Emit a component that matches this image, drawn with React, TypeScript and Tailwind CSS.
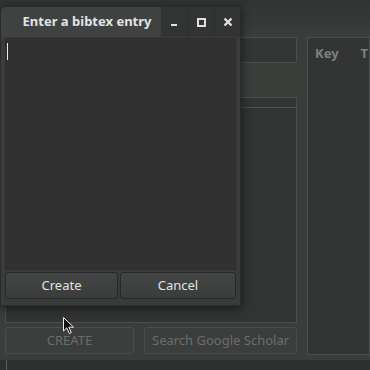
import React from "react";

export default function App() {
  return (
    <div
      className="relative w-[370px] h-[370px] overflow-hidden bg-[#3a3e3b] text-[#e2e2e2]"
      style={{ fontFamily: '"Noto Sans", "Open Sans", sans-serif' }}
    >
      {/* background window */}
      <div className="flex flex-col h-full">
        <div className="h-[33px] bg-gradient-to-b from-[#313332] to-[#393c3a]" />
        <div className="flex flex-1 pl-[5px] gap-[10px]">
          <div className="flex flex-col w-[292px] pt-[4px]">
            <div className="h-[26px] ml-[230px] rounded-[2px] border border-[#4b4e4c] bg-[#343635]" />
            <div className="h-[34px]" />
            <div className="flex-1 flex flex-col border border-[#4b4e4c] bg-[#363937]">
              <div className="h-[10px] bg-[#333534] border-b border-[#4b4e4c]" />
              <div className="flex-1 bg-[#323433]" />
            </div>
            <div className="flex gap-[10px] mt-[4px] h-[27px]">
              <div className="w-[129px] rounded-[3px] border border-[#4a4d4b] bg-[#3b3e3c] flex items-center justify-center text-[13px] text-[#6a6d6b]">
                CREATE
              </div>
              <div className="flex-1 rounded-[3px] border border-[#4a4d4b] bg-[#3b3e3c] flex items-center px-[7px] text-[13px] text-[#6a6d6b] whitespace-nowrap overflow-hidden">
                Search Google Scholar
              </div>
            </div>
            <div className="h-[6px]" />
          </div>
          <div className="flex-1 mt-[4px] mb-[5px] border border-[#4b4e4c] bg-[#333534] pl-[7px] pt-[6px] flex justify-between">
            <span className="text-[13px] font-bold text-[#7e817f]">Key</span>
            <span className="text-[13px] font-bold text-[#7e817f] mr-[1px]">T</span>
          </div>
        </div>
        <div className="h-[10px] bg-[#2e302f] flex">
          <div className="ml-[6px] w-px bg-[#5a5d5b]" />
        </div>
      </div>

      {/* dialog */}
      <div className="absolute left-0 top-[6px] w-[241px] h-[300px] bg-[#393c3a] border border-[#2a2c2b] rounded-t-[5px] shadow-[0_2px_10px_rgba(0,0,0,0.6)] flex flex-col">
        <div className="h-[30px] flex bg-[#323433] rounded-t-[5px]">
          <div className="w-[160px] bg-[#3f4240] rounded-tl-[5px] rounded-br-[4px] flex items-center justify-center pl-[12px] text-[13px] font-bold text-[#e4e4e4] whitespace-nowrap">
            Enter a bibtex entry
          </div>
          <div className="w-[27px] flex items-center justify-center border-r border-[#2c2e2d]">
            <div className="w-[6px] h-[2px] bg-[#e0e0e0] mt-[5px]" />
          </div>
          <div className="w-[27px] flex items-center justify-center border-r border-[#2c2e2d]">
            <div className="w-[9px] h-[9px] border-2 border-[#e0e0e0]" />
          </div>
          <div className="flex-1 flex items-center justify-center">
            <svg width="10" height="10" viewBox="0 0 10 10">
              <path d="M1.5 1.5 L8.5 8.5 M8.5 1.5 L1.5 8.5" stroke="#e0e0e0" strokeWidth="2.4" />
            </svg>
          </div>
        </div>
        <div className="flex-1 flex flex-col px-[4px] pb-[6px] pt-[1px] gap-[2px]">
          <div className="flex-1 bg-[#303130] border border-[#2b2d2c] pt-[4px] pl-[1px]">
            <div className="w-px h-[17px] bg-[#e8e8e8]" />
          </div>
          <div className="flex gap-[2px] h-[27px]">
            <div className="w-[113px] rounded-[3px] border border-[#272928] bg-gradient-to-b from-[#434644] to-[#3a3d3b] flex items-center justify-center text-[13px] text-[#e2e2e2]">
              Create
            </div>
            <div className="flex-1 rounded-[3px] border border-[#272928] bg-gradient-to-b from-[#434644] to-[#3a3d3b] flex items-center justify-center text-[13px] text-[#e2e2e2]">
              Cancel
            </div>
          </div>
        </div>
      </div>

      {/* mouse cursor */}
      <svg className="absolute left-[63px] top-[317px]" width="12" height="18" viewBox="0 0 12 18">
        <path d="M0.5 0.5 L0.5 14 L3.8 10.8 L6.3 16.5 L8.3 15.6 L5.9 10.2 L10.5 10.2 Z" fill="#111" stroke="#eee" strokeWidth="1" />
      </svg>
    </div>
  );
}
